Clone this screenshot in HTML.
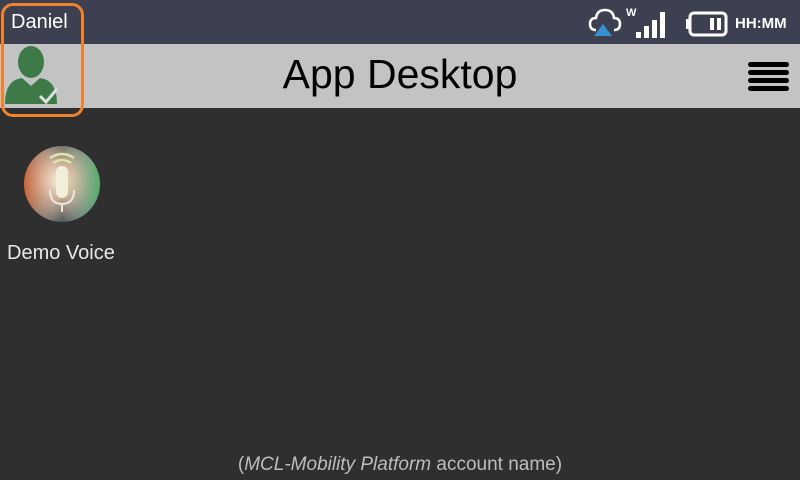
<!DOCTYPE html>
<html><head><meta charset="utf-8"><style>
*{margin:0;padding:0;box-sizing:border-box}
body{width:800px;height:480px;background:#2f2f2f;font-family:"Liberation Sans",sans-serif;position:relative;overflow:hidden}
.status{position:absolute;left:0;top:0;width:800px;height:44px;background:#3c4050}
.head{position:absolute;left:0;top:44px;width:800px;height:64px;background:#c3c3c3}
.title{position:absolute;left:0;width:800px;top:51px;text-align:center;font-size:41px;color:#000}
.name{position:absolute;left:11px;top:11px;font-size:20px;color:#fff}
.box{position:absolute;left:1px;top:3px;width:83px;height:114px;border:3px solid #f0822e;border-radius:12px}
.lbl{position:absolute;left:7px;top:242px;font-size:20px;color:#e8e8e8}
.foot{position:absolute;left:0;width:800px;top:454px;text-align:center;font-size:19px;color:#bdbdbd}
.time{position:absolute;left:735px;top:15px;font-size:15px;font-weight:bold;color:#fff}
</style></head><body>
<div class="status"></div>
<div class="head"></div>
<div class="name">Daniel</div>
<div class="title">App Desktop</div>
<svg style="position:absolute;left:0;top:44px" width="80" height="64">
<ellipse cx="31" cy="18" rx="13" ry="16" fill="#3d7a48"/>
<path d="M5 60 Q5 36 22 34 L31 42 L40 34 Q57 36 57 60 Z" fill="#3d7a48"/>
<path d="M40 52 L46 58 L57 45" stroke="#e0e0e0" stroke-width="3" fill="none"/>
</svg>
<div class="box"></div>
<svg style="position:absolute;left:748px;top:61px" width="42" height="32">
<rect x="0" y="1" width="41" height="5" rx="2.5" fill="#000"/>
<rect x="0" y="9" width="41" height="5" rx="2.5" fill="#000"/>
<rect x="0" y="17" width="41" height="5" rx="2.5" fill="#000"/>
<rect x="0" y="25" width="41" height="5" rx="2.5" fill="#000"/>
</svg>
<svg style="position:absolute;left:588px;top:4px" width="210" height="36">
<path d="M8 26 Q2 26 2 20 Q2 14 8 14 Q9 6 17 6 Q25 6 26 14 Q32 14 32 20 Q32 26 26 26" stroke="#fff" stroke-width="2.5" fill="none"/>
<path d="M15 20 L24 32 L6 32 Z" fill="#3a8fd0"/>
<text x="38" y="12" font-size="11" font-weight="bold" fill="#fff" font-family="Liberation Sans">W</text>
<rect x="48" y="28" width="5" height="6" fill="#fff"/>
<rect x="56" y="22" width="5" height="12" fill="#fff"/>
<rect x="64" y="16" width="5" height="18" fill="#fff"/>
<rect x="72" y="8" width="5" height="26" fill="#fff"/>
<rect x="102" y="9" width="36" height="22" rx="4" stroke="#fff" stroke-width="3" fill="none"/>
<rect x="98" y="15" width="4" height="10" fill="#fff"/>
<rect x="122" y="14" width="4" height="12" fill="#fff"/>
<rect x="129" y="14" width="4" height="12" fill="#fff"/>
</svg>
<div class="time">HH:MM</div>
<svg style="position:absolute;left:22px;top:144px" width="82" height="82">
<defs>
<radialGradient id="g" cx="0.45" cy="0.45" r="0.6">
<stop offset="0" stop-color="#f4efe0"/>
<stop offset="0.4" stop-color="#c9a88a"/>
<stop offset="1" stop-color="#3a4a50"/>
</radialGradient>
<linearGradient id="h" x1="0" y1="0" x2="1" y2="0">
<stop offset="0" stop-color="#e0602c" stop-opacity=".8"/>
<stop offset=".5" stop-color="#fff" stop-opacity="0"/>
<stop offset="1" stop-color="#58c070" stop-opacity=".8"/>
</linearGradient>
</defs>
<circle cx="40" cy="40" r="38" fill="url(#g)"/>
<circle cx="40" cy="40" r="38" fill="url(#h)"/>
<path d="M28 14 Q40 6 52 14 M31 19 Q40 13 49 19" stroke="#d8e8b0" stroke-width="2.5" fill="none"/>
<rect x="34" y="22" width="12" height="32" rx="6" fill="#f0efd8"/>
<path d="M28 46 Q28 60 40 60 Q52 60 52 46 M40 60 V68" stroke="#e8e8e8" stroke-width="2" fill="none"/>
</svg>
<div class="lbl">Demo Voice</div>
<div class="foot">(<i>MCL-Mobility Platform</i> account name)</div>
</body></html>
